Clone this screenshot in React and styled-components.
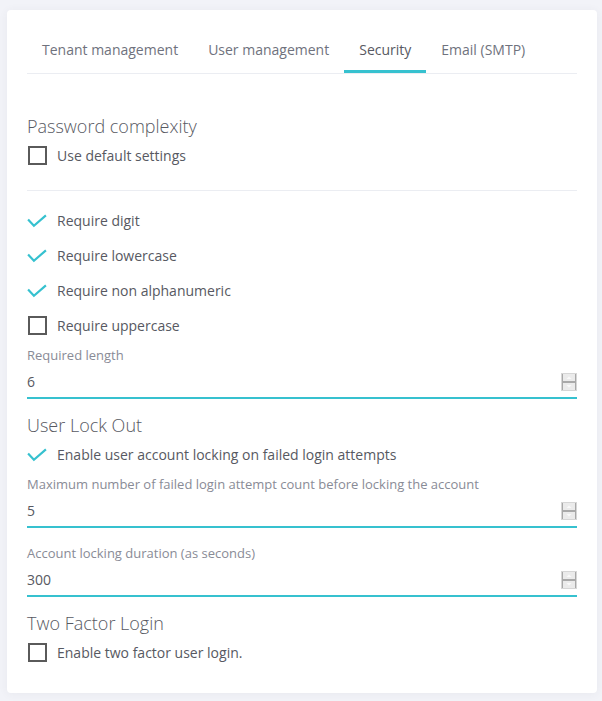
import React from 'react';
import styled, { createGlobalStyle } from 'styled-components';

const GlobalStyle = createGlobalStyle`
    html, body {
        margin: 0;
        padding: 0;
        background: #f2f3f8;
    }
    body {
        font-family: "Open Sans", "DejaVu Sans", sans-serif;
        color: #575962;
        font-size: 14px;
    }
`;

const Page = styled.div`
    padding: 10px 5px 9px 7px;
`;

const Card = styled.div`
    background: #fff;
    border-radius: 4px;
    box-shadow: 0 1px 10px 0 rgba(69, 65, 78, 0.06);
    padding: 24px 20px 23px;
`;

const TabList = styled.ul`
    display: flex;
    list-style: none;
    margin: 0;
    padding: 0;
    border-bottom: 1px solid #ebedf2;
`;

const Tab = styled.li`
    padding: 6px 15px 10px;
    line-height: 20px;
    font-size: 14px;
    color: ${p => (p.$active ? '#575962' : '#6f727d')};
    border-bottom: 3px solid ${p => (p.$active ? '#36c1cf' : 'transparent')};
    cursor: pointer;
`;

const TabContent = styled.div`
    padding-top: 40px;
`;

const Heading = styled.h5`
    margin: ${p => p.$top || 0}px 0 0;
    font-size: 18px;
    font-weight: 300;
    line-height: 24px;
    color: #575962;
`;

const Separator = styled.div`
    height: 1px;
    background: #ebedf2;
    margin: 17px 0 12px;
`;

const CheckRow = styled.label`
    display: flex;
    align-items: center;
    height: 35px;
    font-size: 14px;
    color: #575962;
`;

const Box = styled.span`
    width: 20px;
    height: 20px;
    margin-right: 10px;
    display: flex;
    align-items: center;
    justify-content: center;
    flex-shrink: 0;
`;

const EmptyBox = styled.span`
    width: 15px;
    height: 15px;
    border: 2px solid #5a5a5a;
    margin-left: 1px;
`;

const FormGroup = styled.div`
    margin-top: ${p => p.$top}px;
`;

const Label = styled.div`
    font-size: 13px;
    line-height: 18px;
    color: #898b96;
    margin-bottom: 2px;
`;

const InputWrap = styled.div`
    display: flex;
    align-items: center;
    height: 31px;
    border-bottom: 2px solid #36c1cf;
`;

const Value = styled.span`
    flex: 1;
    font-size: 14px;
    color: #575962;
    line-height: 20px;
    padding-top: 1px;
`;

const Spinner = styled.svg`
    width: 16px;
    height: 18px;
    display: block;
`;

function Check({ checked }) {
    return (
        <Box>
            {checked ? (
                <svg width="22" height="14" viewBox="0 0 22 14">
                    <path d="M1.2 5.4 L7.6 12.2 L20.8 0.8" fill="none" stroke="#36c1cf" strokeWidth="2.4" />
                </svg>
            ) : (
                <EmptyBox />
            )}
        </Box>
    );
}

function CheckItem({ checked, children }) {
    return (
        <CheckRow>
            <Check checked={checked} />
            {children}
        </CheckRow>
    );
}

function NumberField({ label, value, top }) {
    return (
        <FormGroup $top={top}>
            <Label>{label}</Label>
            <InputWrap>
                <Value>{value}</Value>
                <Spinner viewBox="0 0 16 18">
                    <rect x="0" y="0" width="16" height="18" fill="#ebebeb" />
                    <rect x="0.5" y="0.5" width="15" height="17" fill="none" stroke="#d6d6d6" />
                    <rect x="1" y="8" width="14" height="2" fill="#a9a9a9" />
                    <rect x="1" y="1" width="1" height="16" fill="#a9a9a9" />
                    <rect x="14" y="1" width="1" height="16" fill="#a9a9a9" />
                    <path d="M5.5 6 L8 3.5 L10.5 6 Z" fill="#fafafa" />
                    <path d="M5.5 12 L8 14.5 L10.5 12 Z" fill="#fafafa" />
                </Spinner>
            </InputWrap>
        </FormGroup>
    );
}

export default function App() {
    return (
        <Page>
            <GlobalStyle />
            <Card>
                {/* Tabs */}
                <TabList>
                    <Tab>Tenant management</Tab>
                    <Tab>User management</Tab>
                    <Tab $active>Security</Tab>
                    <Tab>Email (SMTP)</Tab>
                </TabList>

                <TabContent>
                    <Heading>Password complexity</Heading>
                    <CheckItem>Use default settings</CheckItem>
                    <Separator />
                    <CheckItem checked>Require digit</CheckItem>
                    <CheckItem checked>Require lowercase</CheckItem>
                    <CheckItem checked>Require non alphanumeric</CheckItem>
                    <CheckItem>Require uppercase</CheckItem>
                    <NumberField label="Required length" value="6" top={3} />

                    <Heading $top={14}>User Lock Out</Heading>
                    <CheckItem checked>Enable user account locking on failed login attempts</CheckItem>
                    <NumberField
                        label="Maximum number of failed login attempt count before locking the account"
                        value="5"
                        top={3}
                    />
                    <NumberField label="Account locking duration (as seconds)" value="300" top={16} />

                    <Heading $top={14}>Two Factor Login</Heading>
                    <CheckItem>Enable two factor user login.</CheckItem>
                </TabContent>
            </Card>
        </Page>
    );
}
